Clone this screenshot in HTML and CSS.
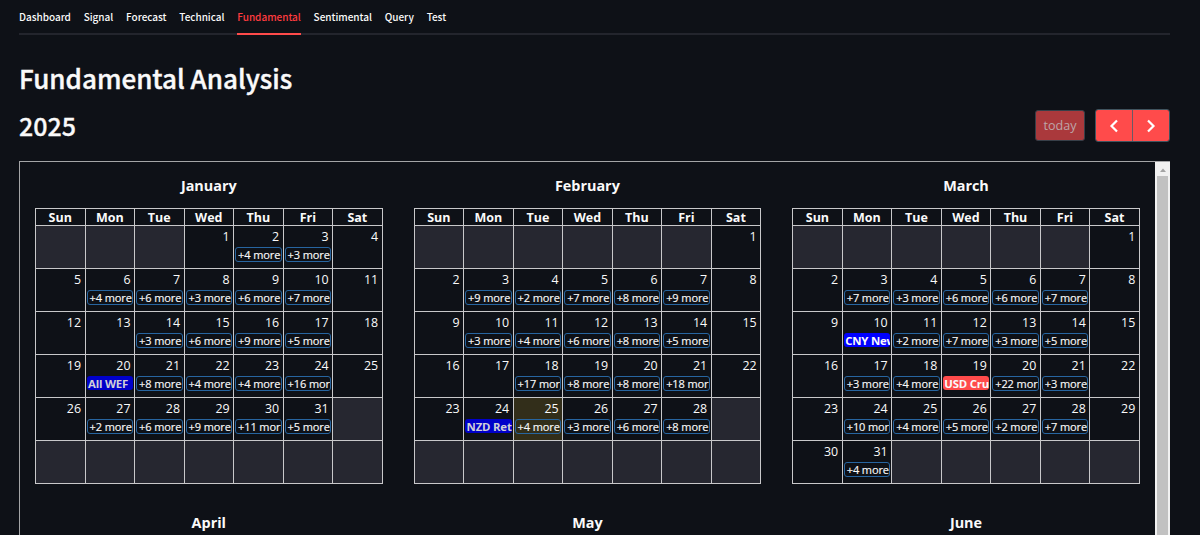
FILE: index.html
```html
<!DOCTYPE html>
<html lang="en">
<head>
<meta charset="utf-8">
<title>Fundamental Analysis</title>
<link rel="stylesheet" href="styles.css">
</head>
<body>
<div class="page">
  <nav class="tabs">
    <a class="tab">Dashboard</a>
    <a class="tab">Signal</a>
    <a class="tab">Forecast</a>
    <a class="tab">Technical</a>
    <a class="tab tab-active">Fundamental</a>
    <a class="tab">Sentimental</a>
    <a class="tab">Query</a>
    <a class="tab">Test</a>
  </nav>
  <h1 class="title">Fundamental Analysis</h1>
  <div class="toolbar">
    <h2 class="year">2025</h2>
    <div class="actions">
      <button class="today" disabled>today</button>
      <div class="pager">
        <button class="arrow" aria-label="Previous year"><svg width="10" height="14" viewBox="0 0 10 14"><path d="M8 1.5L2.5 7L8 12.5"/></svg></button>
        <button class="arrow" aria-label="Next year"><svg width="10" height="14" viewBox="0 0 10 14"><path d="M2 1.5L7.5 7L2 12.5"/></svg></button>
      </div>
    </div>
  </div>
  <div class="calendar">
    <div class="months" id="months"></div>
    <div class="scrollbar">
      <svg class="scroll-up" width="6" height="4" viewBox="0 0 6 4"><path d="M0 4L3 0.5L6 4Z"/></svg>
      <div class="thumb"></div>
    </div>
  </div>
</div>
<script src="calendar.js"></script>
</body>
</html>
```

FILE: styles.css
```css
* { box-sizing: border-box; }
body {
  margin: 0;
  height: 535px;
  overflow: hidden;
  background: #0e1117;
  color: #fafafa;
  font-family: "Open Sans", "Noto Sans", sans-serif;
}
.page {
  height: 535px;
  padding: 0 30px 0 19px;
  display: flex;
  flex-direction: column;
}
.tabs {
  display: flex;
  flex: none;
  gap: 12.8px;
  height: 35px;
  font: 500 10px/34px "Noto Sans CJK SC", sans-serif;
  letter-spacing: -0.02px;
  box-shadow: inset 0 -2px #23252d;
}
.tab { height: 35px; white-space: nowrap; }
.tab-active { color: #ff3b3f; border-bottom: 2px solid #ff4b4b; }
.title {
  margin: 23px 0 0;
  height: 40px;
  font: 500 26px/40px "Noto Sans CJK SC", sans-serif;
  -webkit-text-stroke: 0.4px #fafafa;
  white-space: nowrap;
}
.toolbar {
  display: flex;
  flex: none;
  justify-content: space-between;
  align-items: center;
  height: 33px;
  margin-top: 11px;
}
.year {
  margin: 0;
  font: 500 25px/33px "Noto Sans CJK SC", sans-serif;
  -webkit-text-stroke: 0.3px #fafafa;
}
.actions { display: flex; align-items: center; gap: 10px; }
.today {
  width: 50px;
  height: 31px;
  padding: 0;
  border: 1px solid #373f48;
  border-radius: 3px;
  background: #aa393c;
  color: #bda5a8;
  font: 12.6px "Open Sans", sans-serif;
}
.pager {
  display: flex;
  width: 75px;
  height: 33px;
  border: 1px solid #40545f;
  border-radius: 3px;
  overflow: hidden;
}
.arrow {
  flex: 1;
  display: flex;
  align-items: center;
  justify-content: center;
  padding: 0;
  border: 0;
  background: #ff4b4b;
}
.arrow + .arrow { border-left: 1px solid #6a5965; }
.arrow path { fill: none; stroke: #fff; stroke-width: 2.2; }
.calendar {
  display: flex;
  flex: none;
  height: 374px;
  margin-top: 19px;
  overflow: hidden;
  border-top: 1px solid #a4a5a7;
  border-left: 1px solid #a4a5a7;
}
.months {
  flex: 1;
  display: grid;
  grid-template-columns: repeat(3, 347.6px);
  gap: 30px 31px;
  padding: 15px 0 0 15px;
  align-content: start;
}
.month-name {
  height: 31px;
  text-align: center;
  font-size: 14.4px;
  line-height: 18px;
  font-weight: 700;
}
.grid {
  display: grid;
  grid-template-columns: repeat(7, 1fr);
  grid-template-rows: 17.4px repeat(6, 43.02px);
  border-top: 1px solid #c8c8ca;
  border-left: 1px solid #c8c8ca;
}
.weekday, .day {
  min-width: 0;
  border-right: 1px solid #c8c8ca;
  border-bottom: 1px solid #c8c8ca;
}
.weekday {
  text-align: center;
  font-size: 12.5px;
  line-height: 18px;
  font-weight: 700;
}
.day { padding: 3px 1px 0 1px; overflow: hidden; }
.day-off { background: #262730; }
.day-today { background: #322e1a; }
.number {
  height: 18px;
  padding-right: 2.5px;
  text-align: right;
  font-size: 12.4px;
  line-height: 16px;
}
.more, .event {
  height: 15px;
  border-radius: 3px;
  font-size: 11px;
  line-height: 13px;
  white-space: nowrap;
  overflow: hidden;
}
.more {
  border: 1px solid #2765a0;
  padding-left: 2px;
  letter-spacing: -0.1px;
  -webkit-text-stroke: 0.15px #fafafa;
}
.event { height: 14px; padding-left: 1.5px; font-size: 11.4px; line-height: 15px; font-weight: 700; letter-spacing: -0.2px; }
.event-past { background: #0000ca; color: #d0d0d8; }
.event-blue { background: #0000ff; }
.event-red { background: #ff4b4b; }
.scrollbar {
  width: 15px;
  background: #f1f1f1;
  display: flex;
  flex-direction: column;
  align-items: center;
}
.scroll-up { margin: 6px 0 4px; fill: #a3a3a3; }
.thumb { width: 11px; flex: 1; background: #c1c1c1; }
```

FILE: calendar.js
```js
const weekdays = ["Sun", "Mon", "Tue", "Wed", "Thu", "Fri", "Sat"];
const months = [
  { name: "January", start: 3, days: 31,
    more: { 2: 4, 3: 3, 6: 4, 7: 6, 8: 3, 9: 6, 10: 7, 14: 3, 15: 6, 16: 9, 17: 5, 21: 8, 22: 4, 23: 4, 24: 16, 27: 2, 28: 6, 29: 9, 30: 11, 31: 5 },
    events: { 20: ["All WEF", "past"] } },
  { name: "February", start: 6, days: 28, today: 25,
    more: { 3: 9, 4: 2, 5: 7, 6: 8, 7: 9, 10: 3, 11: 4, 12: 6, 13: 8, 14: 5, 18: 17, 19: 8, 20: 8, 21: 18, 25: 4, 26: 3, 27: 6, 28: 8 },
    events: { 24: ["NZD Ret", "past"] } },
  { name: "March", start: 6, days: 31,
    more: { 3: 7, 4: 3, 5: 6, 6: 6, 7: 7, 11: 2, 12: 7, 13: 3, 14: 5, 17: 3, 18: 4, 20: 22, 21: 3, 24: 10, 25: 4, 26: 5, 27: 2, 28: 7, 31: 4 },
    events: { 10: ["CNY New", "blue"], 19: ["USD Cru", "red"] } },
  { name: "April" },
  { name: "May" },
  { name: "June" }
];

function dayCell(month, day) {
  if (day < 1 || day > month.days) return '<div class="day day-off"></div>';
  const event = month.events[day];
  const count = month.more[day];
  let entry = "";
  if (event) entry = `<div class="event event-${event[1]}">${event[0]}</div>`;
  else if (count) entry = `<div class="more">+${count} ${count > 9 ? "mor" : "more"}</div>`;
  const today = day === month.today ? " day-today" : "";
  return `<div class="day${today}"><div class="number">${day}</div>${entry}</div>`;
}

document.getElementById("months").innerHTML = months.map(month => {
  let grid = "";
  if (month.days) {
    const cells = Array.from({ length: 42 }, (_, i) => dayCell(month, i - month.start + 1));
    grid = `<div class="grid">${weekdays.map(d => `<div class="weekday">${d}</div>`).join("")}${cells.join("")}</div>`;
  }
  return `<section class="month"><div class="month-name">${month.name}</div>${grid}</section>`;
}).join("");
```
